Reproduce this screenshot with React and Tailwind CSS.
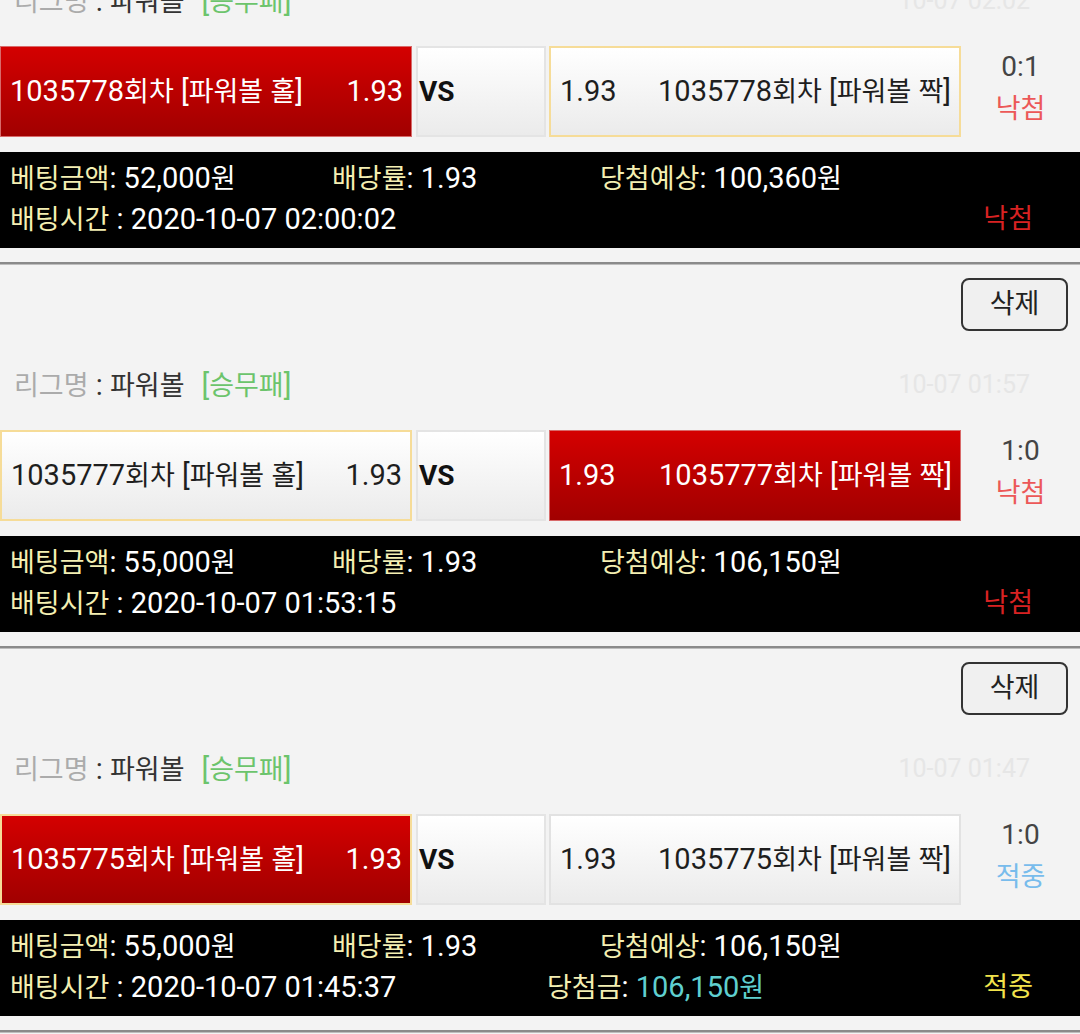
import React from "react";

const FONT = { fontFamily: 'Roboto, "Noto Sans CJK KR", "Noto Sans", sans-serif' };

const sections = [
  {
    time: "10-07 02:02",
    round: "1035778",
    left: "red",
    right: "whiteSel",
    score: "0:1",
    result: "낙첨",
    amount: "52,000원",
    expected: "100,360원",
    betTime: "2020-10-07 02:00:02",
    win: null,
  },
  {
    time: "10-07 01:57",
    round: "1035777",
    left: "whiteSel",
    right: "red",
    score: "1:0",
    result: "낙첨",
    amount: "55,000원",
    expected: "106,150원",
    betTime: "2020-10-07 01:53:15",
    win: null,
  },
  {
    time: "10-07 01:47",
    round: "1035775",
    left: "redSel",
    right: "white",
    score: "1:0",
    result: "적중",
    amount: "55,000원",
    expected: "106,150원",
    betTime: "2020-10-07 01:45:37",
    win: "106,150원",
  },
];

// Hangul runs are drawn a bit smaller than Latin runs, as in the reference
function T({ children }) {
  const parts = String(children).split(/([\uAC00-\uD7A3\u3131-\u318E]+)/);
  return (
    <>
      {parts.map((p, i) =>
        /[\uAC00-\uD7A3\u3131-\u318E]/.test(p) ? (
          <span key={i} className="text-[27px]">
            {p}
          </span>
        ) : (
          <React.Fragment key={i}>{p}</React.Fragment>
        )
      )}
    </>
  );
}

function boxClass(kind) {
  switch (kind) {
    case "red":
      return "bg-linear-to-b from-[#d40000] to-[#a10000] border border-[#d86a6a] text-white";
    case "redSel":
      return "bg-linear-to-b from-[#d40000] to-[#a10000] border-2 border-[#f6dc98] text-white";
    case "whiteSel":
      return "bg-linear-to-b from-[#ffffff] to-[#ebebeb] border-2 border-[#f6dc98] text-[#1e1e1e]";
    default:
      return "bg-linear-to-b from-[#ffffff] to-[#ebebeb] border-2 border-[#e2e2e2] text-[#1e1e1e]";
  }
}

function Section({ s }) {
  const lost = s.result === "낙첨";
  return (
    <div>
      <div className="h-[3px] bg-[#8a8a8a] border-b border-[#bdbdbd]" />
      <div className="flex justify-end pr-[12px] pt-[13px]">
        <button className="w-[107px] h-[53px] rounded-[8px] border-2 border-[#333] bg-[#f0f0f0] text-[27px] text-[#222] flex items-center justify-center">
          삭제
        </button>
      </div>
      <div className="mt-[34px] h-[40px] flex items-center text-[29px] leading-[40px]">
        <span className="pl-[14px] text-[#ababab]">
          <T>리그명</T>
        </span>
        <span className="text-[#333]">
          <T>{"\u00a0: 파워볼"}</T>
        </span>
        <span className="ml-[17px] text-[#6cc46c]">
          <T>[승무패]</T>
        </span>
        <span className="ml-auto pr-[50px] text-[25px] text-[#e6e6e6]">{s.time}</span>
      </div>
      <div className="mt-[25px] h-[91px] flex text-[29px]">
        <div className={`w-[412px] shrink-0 flex items-center justify-between pl-[9px] pr-[8px] ${boxClass(s.left)}`}>
          <span>
            <T>{`${s.round}회차 [파워볼 홀]`}</T>
          </span>
          <span>1.93</span>
        </div>
        <div className="ml-[4px] w-[130px] shrink-0 flex items-center pl-[1px] bg-linear-to-b from-[#ffffff] to-[#ebebeb] border-2 border-[#e4e4e4] text-[28px] font-bold text-[#111]">
          VS
        </div>
        <div className={`ml-[3px] w-[412px] shrink-0 flex items-center justify-between pl-[9px] pr-[8px] ${boxClass(s.right)}`}>
          <span>1.93</span>
          <span>
            <T>{`${s.round}회차 [파워볼 짝]`}</T>
          </span>
        </div>
        <div className="flex-1 flex flex-col items-center leading-[42px]">
          <span className="text-[28px] text-[#444]">{s.score}</span>
          <span className={`text-[27px] ${lost ? "text-[#ec5858]" : "text-[#78bcec]"}`}>{s.result}</span>
        </div>
      </div>
      <div className="mt-[15px] h-[96px] bg-black pt-[6px] text-[29px] leading-[40px] text-white">
        <div className="flex pl-[10px]">
          <span className="w-[322px] shrink-0">
            <span className="text-[#f4efb2]">
              <T>베팅금액</T>
            </span>
            : <T>{s.amount}</T>
          </span>
          <span className="w-[268px] shrink-0">
            <span className="text-[#f4efb2]">
              <T>배당률</T>
            </span>
            : 1.93
          </span>
          <span>
            <span className="text-[#f4efb2]">
              <T>당첨예상</T>
            </span>
            : <T>{s.expected}</T>
          </span>
        </div>
        <div className="flex pl-[10px]">
          <span className="w-[537px] shrink-0">
            <span className="text-[#f4efb2]">
              <T>배팅시간</T>
            </span>{" "}
            : {s.betTime}
          </span>
          {s.win && (
            <span>
              <span className="text-[#f4efb2]">
                <T>당첨금</T>
              </span>
              :{" "}
              <span className="text-[#5fcfcf]">
                <T>{s.win}</T>
              </span>
            </span>
          )}
          <span className={`ml-auto pr-[47px] text-[27px] ${lost ? "text-[#d82222]" : "text-[#f2e34c]"}`}>
            {s.result}
          </span>
        </div>
      </div>
      <div className="h-[14px]" />
    </div>
  );
}

export default function App() {
  return (
    <div className="w-[1080px] h-[1034px] overflow-hidden bg-[#f3f3f3]" style={FONT}>
      <div className="mt-[-122px]">
        {sections.map((s) => (
          <Section key={s.round} s={s} />
        ))}
        <div className="h-[3px] bg-[#8a8a8a] border-b border-[#bdbdbd]" />
        <div className="h-[40px]" />
      </div>
    </div>
  );
}
